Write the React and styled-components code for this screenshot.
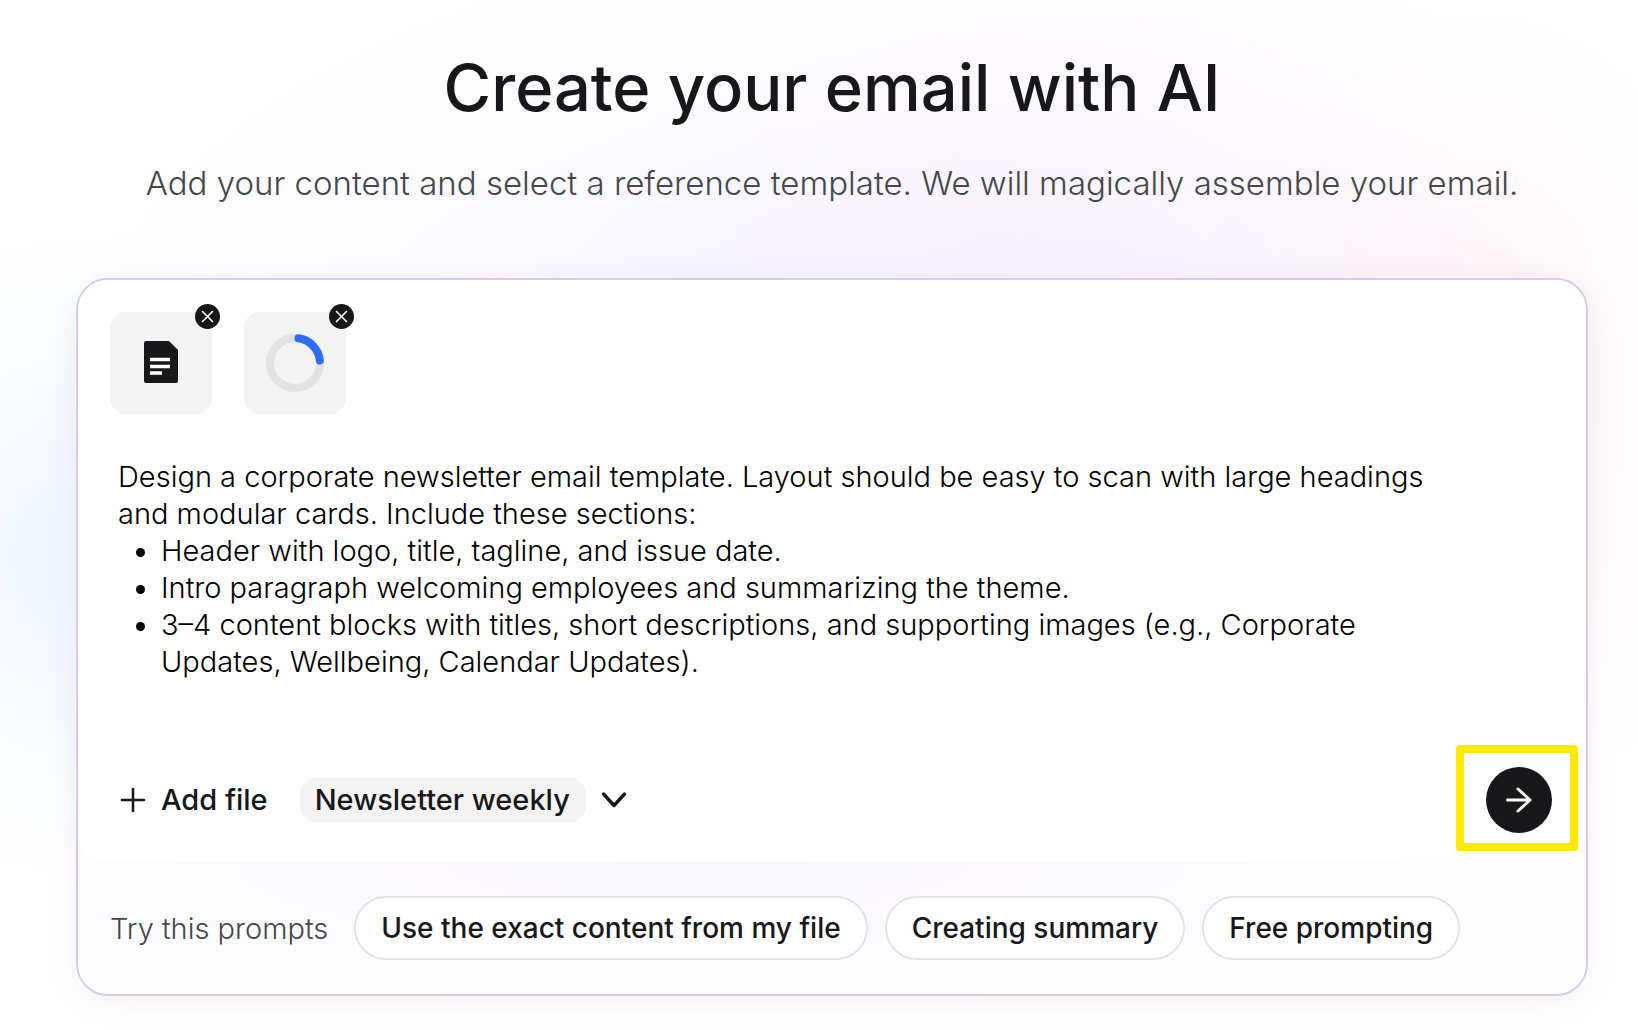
import React, { useState } from "react";
import styled, { createGlobalStyle } from "styled-components";

const GlobalStyle = createGlobalStyle`
  *, *::before, *::after { box-sizing: border-box; }
  body { margin: 0; background: #fff; }
  button, select { font: inherit; color: inherit; }
`;

const Page = styled.main`
  min-height: 100vh;
  padding: 48px 50px 34px 76px;
  font-family: Inter, "Liberation Sans", sans-serif;
  color: #18181b;
  background:
    radial-gradient(ellipse 34% 42% at 66% 33%, rgba(248, 234, 252, 0.55), rgba(248, 234, 252, 0) 100%),
    radial-gradient(ellipse 18% 40% at 90% 40%, rgba(253, 244, 246, 0.9), rgba(253, 244, 246, 0) 100%),
    radial-gradient(ellipse 48% 50% at 50% 44%, rgba(240, 239, 254, 0.75), rgba(240, 239, 254, 0) 100%),
    radial-gradient(ellipse 20% 32% at 6% 54%, rgba(238, 244, 255, 0.9), rgba(238, 244, 255, 0) 100%),
    #fff;
`;

const Header = styled.header`
  text-align: center;
`;

const Title = styled.h1`
  margin: 0;
  font-size: 65px;
  line-height: 80px;
  font-weight: 500;
`;

const Subtitle = styled.p`
  margin: 35px 0 0;
  font-size: 33px;
  line-height: 40px;
  font-weight: 300;
  color: #46464c;
`;

const Card = styled.form`
  margin: 75px 0 0;
  border: 2px solid #dac9f3;
  border-radius: 32px;
  background: radial-gradient(ellipse 60% 22% at 42% 82%, #f9f6fe, #fefeff 100%);
  box-shadow: 0 6px 36px rgba(24, 24, 60, 0.06);
`;

const Composer = styled.section`
  padding: 32px 34px 29px 32px;
  border-radius: 30px;
  background: #fff;
`;

const Files = styled.ul`
  display: flex;
  gap: 32px;
  margin: 0;
  padding: 0;
  list-style: none;
`;

const FileTile = styled.li`
  position: relative;
  display: flex;
  align-items: center;
  justify-content: center;
  width: 102px;
  height: 102px;
  border-radius: 16px;
  background: #f3f3f3;
`;

const RemoveButton = styled.button`
  position: absolute;
  top: -8px;
  right: -8px;
  display: flex;
  width: 25px;
  height: 25px;
  padding: 0;
  border: 0;
  border-radius: 50%;
  background: #18181b;
  color: #fff;
`;

const Editor = styled.div`
  max-width: 1340px;
  margin-top: 44px;
  padding: 0 8px;
  font-size: 29px;
  line-height: 37px;
  font-weight: 300;
  color: #000;
  outline: none;

  p { margin: 0; }
  ul { margin: 0; padding-left: 43px; }
`;

const Toolbar = styled.div`
  display: flex;
  align-items: center;
  gap: 32px;
  margin-top: 87px;
  padding-left: 8px;
  font-size: 29px;
  line-height: 44px;
  font-weight: 500;
`;

const AddButton = styled.button`
  display: flex;
  align-items: center;
  gap: 15px;
  padding: 0;
  border: 0;
  background: none;
`;

const TemplatePicker = styled.label`
  display: flex;
  align-items: center;
  gap: 14px;
`;

const TemplateSelect = styled.select`
  appearance: none;
  height: 44px;
  padding: 0 15px;
  border: 0;
  border-radius: 16px;
  background: #f3f3f3;
`;

const SendButton = styled.button`
  position: relative;
  display: flex;
  align-items: center;
  justify-content: center;
  width: 66px;
  height: 66px;
  margin-left: auto;
  padding: 0;
  border: 0;
  border-radius: 50%;
  background: #18181b;
  color: #fff;

  &::after {
    content: "";
    position: absolute;
    inset: -22px -26px -18px -30px;
    border: 8px solid #ffea00;
    border-radius: 4px;
    pointer-events: none;
  }
`;

const Prompts = styled.footer`
  display: flex;
  flex-wrap: wrap;
  align-items: center;
  gap: 17px;
  padding: 34px 32px;
`;

const PromptsLabel = styled.span`
  margin-right: 9px;
  font-size: 29px;
  font-weight: 300;
  color: #46464c;
`;

const PromptChip = styled.button`
  height: 64px;
  padding: 0 25px;
  border: 2px solid #e4e4e7;
  border-radius: 32px;
  background: #fff;
  font-size: 28px;
  font-weight: 500;
`;

const CloseIcon = () => (
  <svg width="25" height="25" viewBox="0 0 25 25" fill="none" stroke="currentColor" strokeWidth="1.6" strokeLinecap="round" aria-hidden="true">
    <path d="M7.5 7.5l10 10M17.5 7.5l-10 10" />
  </svg>
);

const DocumentIcon = () => (
  <svg width="34" height="44" viewBox="0 0 34 44" aria-hidden="true">
    <path d="M2 0h23l9 9v31a2 2 0 0 1-2 2H2a2 2 0 0 1-2-2V2a2 2 0 0 1 2-2z" fill="#18181b" />
    <path d="M6 18.5h20M6 25.5h20M6 32h12" stroke="#fff" strokeWidth="3.4" fill="none" />
  </svg>
);

const Spinner = () => (
  <svg width="58" height="58" viewBox="0 0 58 58" fill="none" strokeWidth="8" role="img" aria-label="Uploading">
    <circle cx="29" cy="29" r="25" stroke="#e2e2e4" />
    <path d="M32.5 4.3A25 25 0 0 1 53.9 26.5" stroke="#2f6df9" strokeLinecap="round" />
  </svg>
);

const PlusIcon = () => (
  <svg width="28" height="26" viewBox="0 0 28 26" fill="none" stroke="currentColor" strokeWidth="2.6" strokeLinecap="round" aria-hidden="true">
    <path d="M15 2v22M4 13h22" />
  </svg>
);

const ChevronIcon = () => (
  <svg width="28" height="20" viewBox="0 0 28 20" fill="none" stroke="currentColor" strokeWidth="3.4" strokeLinecap="round" strokeLinejoin="round" aria-hidden="true">
    <path d="M3.5 4l10.5 11.5L24.5 4" />
  </svg>
);

const ArrowIcon = () => (
  <svg width="30" height="30" viewBox="0 0 30 30" fill="none" stroke="currentColor" strokeWidth="3" strokeLinecap="round" strokeLinejoin="round" aria-hidden="true">
    <path d="M3.5 15H26M14 4l12 11-12 11" />
  </svg>
);

const PROMPTS = ["Use the exact content from my file", "Creating summary", "Free prompting"];

export default function App() {
  const [template, setTemplate] = useState("Newsletter weekly");

  return (
    <>
      <GlobalStyle />
      <Page>
        <Header>
          <Title>Create your email with AI</Title>
          <Subtitle>Add your content and select a reference template. We will magically assemble your email.</Subtitle>
        </Header>
        <Card onSubmit={(event) => event.preventDefault()}>
          <Composer>
            <Files>
              <FileTile>
                <DocumentIcon />
                <RemoveButton type="button" aria-label="Remove file"><CloseIcon /></RemoveButton>
              </FileTile>
              <FileTile>
                <Spinner />
                <RemoveButton type="button" aria-label="Cancel upload"><CloseIcon /></RemoveButton>
              </FileTile>
            </Files>
            <Editor role="textbox" aria-multiline="true" aria-label="Prompt" contentEditable suppressContentEditableWarning spellCheck={false}>
              <p>Design a corporate newsletter email template. Layout should be easy to scan with large headings and modular cards. Include these sections:</p>
              <ul>
                <li>Header with logo, title, tagline, and issue date.</li>
                <li>Intro paragraph welcoming employees and summarizing the theme.</li>
                <li>3–4 content blocks with titles, short descriptions, and supporting images (e.g., Corporate Updates, Wellbeing, Calendar Updates).</li>
              </ul>
            </Editor>
            <Toolbar>
              <AddButton type="button"><PlusIcon />Add file</AddButton>
              <TemplatePicker>
                <TemplateSelect aria-label="Template" value={template} onChange={(event) => setTemplate(event.target.value)}>
                  <option>Newsletter weekly</option>
                </TemplateSelect>
                <ChevronIcon />
              </TemplatePicker>
              <SendButton type="submit" aria-label="Generate email"><ArrowIcon /></SendButton>
            </Toolbar>
          </Composer>
          <Prompts>
            <PromptsLabel>Try this prompts</PromptsLabel>
            {PROMPTS.map((prompt) => (
              <PromptChip key={prompt} type="button">{prompt}</PromptChip>
            ))}
          </Prompts>
        </Card>
      </Page>
    </>
  );
}
